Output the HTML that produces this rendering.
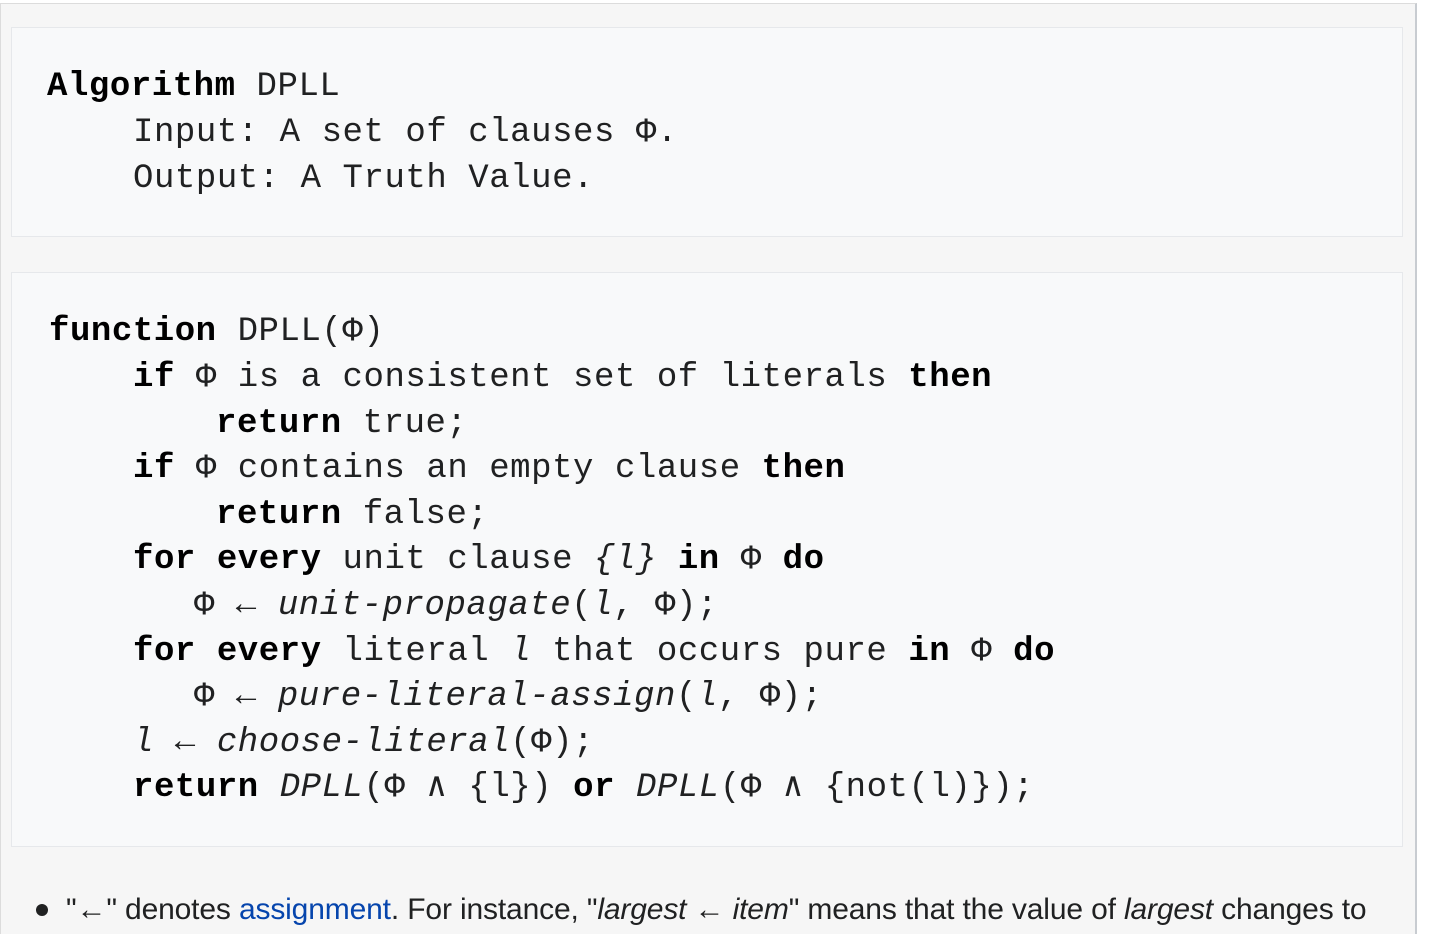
<!DOCTYPE html>
<html><head><meta charset="utf-8"><style>
html,body{margin:0;padding:0;width:1432px;height:914px;overflow:hidden;background:#fff}
#outer{position:absolute;left:0;top:3px;width:1414px;height:930px;background:#f6f6f6;border-top:1px solid #dcdcdc;border-left:1px solid #dcdcdc;border-right:2px solid #c8ccd1}
.box{position:absolute;left:11px;width:1390px;background:#f8f9fa;border:1px solid #e6e8eb}
.l{position:absolute;white-space:pre;font-family:"Liberation Mono","DejaVu Sans Mono",monospace;font-size:34px;letter-spacing:0.55px;line-height:46px;color:#202122}
b{color:#000}
i{font-style:italic}
.txt{position:absolute;top:895px;font-family:"Liberation Sans",sans-serif;font-size:30px;line-height:30px;color:#202122;white-space:nowrap;letter-spacing:-0.15px}
.txt a{color:#0645ad;text-decoration:none}
.dot{position:absolute;left:36px;top:904px;width:12px;height:12px;border-radius:50%;background:#202122}
</style></head><body>
<div id="outer"></div>
<div class="box" style="top:27px;height:208px"></div>
<div class="box" style="top:272px;height:573px"></div>
<div class="l" style="left:47px;top:64px"><b>Algorithm</b> DPLL</div>
<div class="l" style="left:133px;top:110px">Input: A set of clauses Φ.</div>
<div class="l" style="left:133px;top:156px">Output: A Truth Value.</div>

<div class="l" style="left:49px;top:309px"><b>function</b> DPLL(Φ)</div>
<div class="l" style="left:133px;top:355px"><b>if</b> Φ is a consistent set of literals <b>then</b></div>
<div class="l" style="left:216px;top:401px"><b>return</b> true;</div>
<div class="l" style="left:133px;top:446px"><b>if</b> Φ contains an empty clause <b>then</b></div>
<div class="l" style="left:216px;top:492px"><b>return</b> false;</div>
<div class="l" style="left:133px;top:537px"><b>for every</b> unit clause <i>{l}</i> <b>in</b> Φ <b>do</b></div>
<div class="l" style="left:194px;top:583px">Φ ← <i>unit-propagate</i>(<i>l</i>, Φ);</div>
<div class="l" style="left:133px;top:629px"><b>for every</b> literal <i>l</i> that occurs pure <b>in</b> Φ <b>do</b></div>
<div class="l" style="left:194px;top:674px">Φ ← <i>pure-literal-assign</i>(<i>l</i>, Φ);</div>
<div class="l" style="left:133px;top:720px"><i>l</i> ← <i>choose-literal</i>(Φ);</div>
<div class="l" style="left:133px;top:765px"><b>return</b> <i>DPLL</i>(Φ ∧ {l}) <b>or</b> <i>DPLL</i>(Φ ∧ {not(l)});</div>

<div class="dot"></div>
<div class="txt" style="left:66px">"←" denotes <a>assignment</a>. For instance, "<i>largest</i> ← <i>item</i>" means that the value of <i>largest</i> changes to</div>
</body></html>
